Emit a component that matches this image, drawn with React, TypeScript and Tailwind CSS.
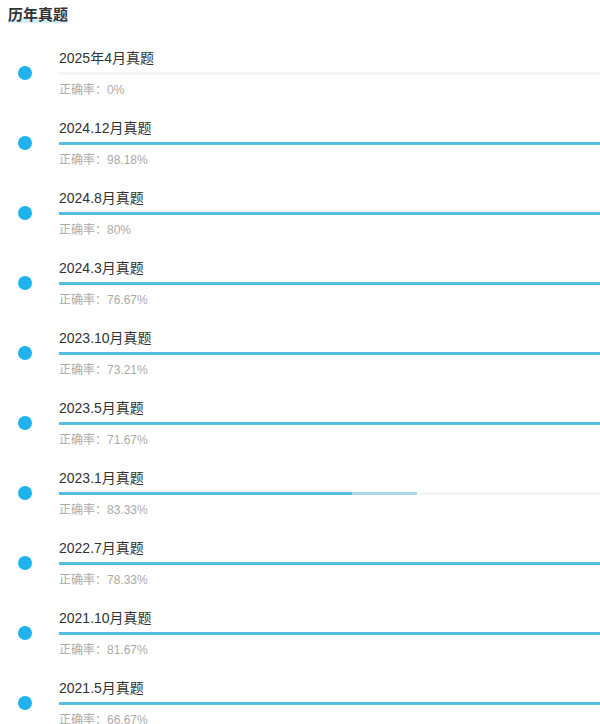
const papers: { name: string; rate: string; done: number; loaded?: number }[] = [
  { name: '2025年4月真题', rate: '0%', done: 0 },
  { name: '2024.12月真题', rate: '98.18%', done: 100 },
  { name: '2024.8月真题', rate: '80%', done: 100 },
  { name: '2024.3月真题', rate: '76.67%', done: 100 },
  { name: '2023.10月真题', rate: '73.21%', done: 100 },
  { name: '2023.5月真题', rate: '71.67%', done: 100 },
  { name: '2023.1月真题', rate: '83.33%', done: 54.2, loaded: 66.2 },
  { name: '2022.7月真题', rate: '78.33%', done: 100 },
  { name: '2021.10月真题', rate: '81.67%', done: 100 },
  { name: '2021.5月真题', rate: '66.67%', done: 100 },
];

export default function App() {
  return (
    <div className="bg-white pt-[5px] font-['Liberation_Sans','Noto_Sans_CJK_SC',sans-serif]">
      {/* Title */}
      <div className="px-2 h-5 leading-5">
        <span className="text-[15px] font-bold text-[#333] bg-[linear-gradient(transparent_75%,#d3eefa_75%)]">
          历年真题
        </span>
      </div>

      {/* List */}
      <ul className="mt-[13px]">
        {papers.map((p) => (
          <li key={p.name} className="flex items-center py-[10px]">
            <span className="ml-[18px] w-[14px] h-[14px] rounded-full bg-[#1fb3ee] flex-shrink-0" />
            <div className="ml-[27px] flex-1 min-w-0">
              <div className="h-5 leading-5 text-[14px] text-[#333]">{p.name}</div>
              <div className="relative mt-1 h-[3px] bg-[#f5f5f5]">
                {p.loaded !== undefined && (
                  <div className="absolute left-0 top-0 h-full bg-[#a9d9eb]" style={{ width: `${p.loaded}%` }} />
                )}
                <div className="absolute left-0 top-0 h-full bg-[#55bde0]" style={{ width: `${p.done}%` }} />
              </div>
              <div className="mt-[7px] h-4 leading-4 text-[12px] text-[#aaa]">正确率：{p.rate}</div>
            </div>
          </li>
        ))}
      </ul>
    </div>
  );
}
